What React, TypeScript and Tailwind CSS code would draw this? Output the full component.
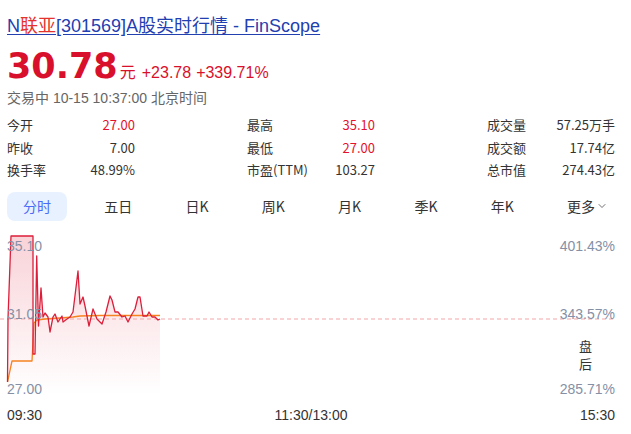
import { ChevronDown } from 'lucide-react';

const SANS = "font-['Liberation_Sans','Noto_Sans_CJK_SC',sans-serif]";
const CJK = "font-['Noto_Sans_CJK_SC','Liberation_Sans',sans-serif]";

interface Stat {
  label: string;
  value: string;
  up?:   boolean;
}

const STATS: Stat[] = [
  { label: '今开',      value: '27.00', up: true },
  { label: '最高',      value: '35.10', up: true },
  { label: '成交量',    value: '57.25万手' },
  { label: '昨收',      value: '7.00' },
  { label: '最低',      value: '27.00', up: true },
  { label: '成交额',    value: '17.74亿' },
  { label: '换手率',    value: '48.99%' },
  { label: '市盈(TTM)', value: '103.27' },
  { label: '总市值',    value: '274.43亿' },
];

const TABS = ['分时', '五日', '日K', '周K', '月K', '季K', '年K'];

// minute prices, already in page coordinates (x, y)
const PRICE: [number, number][] = [
  [7.5, 383], [8, 320], [11, 237], [33, 237], [33, 355], [35, 355], [36.7, 257],
  [38.5, 327], [41, 289], [43, 318], [45, 314], [48, 318], [50, 333], [53, 318],
  [55, 315], [58, 323], [62, 317], [63, 323], [67, 320], [70, 318], [73, 313],
  [78, 272], [80, 305], [83, 298], [85, 307], [89, 327], [93, 310], [97, 320],
  [102, 325], [106, 313], [110, 297], [112, 301], [115, 313], [118, 313],
  [122, 318], [125, 317], [128, 323], [132, 315], [135, 310], [138, 298],
  [140, 298], [143, 317], [147, 317], [149, 313], [152, 318], [155, 318],
  [158, 321], [160, 320],
];

const AVG: [number, number][] = [
  [7.5, 383], [12, 362], [32, 362], [34, 324], [37, 321], [45, 320], [60, 319],
  [73, 318], [80, 317], [100, 316.5], [160, 316.5],
];

const toPath = (pts: [number, number][]) =>
  pts.map(([x, y], i) => `${i === 0 ? 'M' : 'L'}${x} ${y}`).join(' ');

function IntradayChart() {
  const line = toPath(PRICE);
  const area = `${line} L160 396 L7.5 396 Z`;
  return (
    <div className="relative h-[168px] w-full">
      <svg width="631" height="168" viewBox="0 232 631 168" className="absolute inset-0">
        <defs>
          <linearGradient id="fill" x1="0" y1="237" x2="0" y2="396" gradientUnits="userSpaceOnUse">
            <stop offset="0" stopColor="#e0203a" stopOpacity="0.2" />
            <stop offset="1" stopColor="#e0203a" stopOpacity="0" />
          </linearGradient>
        </defs>
        <path d={area} fill="url(#fill)" />
        <line x1="0" y1="320" x2="615" y2="320" stroke="#f3a7a9" strokeWidth="1" strokeDasharray="4 3" />
        <path d={toPath(AVG)} fill="none" stroke="#f5821f" strokeWidth="1.3" strokeLinejoin="round" />
        <path d={line} fill="none" stroke="#dc1e3a" strokeWidth="1.3" strokeLinejoin="round" />
      </svg>

      <div className={`${SANS} absolute left-[7px] top-[7px] text-[14px] leading-4 text-[#8590a6]`}>35.10</div>
      <div className={`${SANS} absolute left-[7px] top-[75px] text-[14px] leading-4 text-[#8590a6]`}>31.05</div>
      <div className={`${SANS} absolute left-[7px] top-[150px] text-[14px] leading-4 text-[#8590a6]`}>27.00</div>
      <div className={`${SANS} absolute right-[16px] top-[7px] text-[14px] leading-4 text-[#8590a6]`}>401.43%</div>
      <div className={`${SANS} absolute right-[16px] top-[75px] text-[14px] leading-4 text-[#8590a6]`}>343.57%</div>
      <div className={`${SANS} absolute right-[16px] top-[150px] text-[14px] leading-4 text-[#8590a6]`}>285.71%</div>
      <div className={`${CJK} absolute left-[579px] top-[106px] flex flex-col text-[13px] leading-[18px] text-[#333]`}>
        <span>盘</span>
        <span>后</span>
      </div>
    </div>
  );
}

export default function App() {
  return (
    <div className="w-[631px] h-[434px] bg-white overflow-hidden">
      <div className="px-[7px] pt-[16px]">
        <a href="#" className={`${SANS} block text-[18px] leading-5 text-[#2240b0] underline underline-offset-[2px]`}>
          N<span className="text-[#e5322d]">联亚</span>[301569]A股实时行情 - FinScope
        </a>

        <div className="mt-[8px] flex items-baseline h-[44px]">
          <span className="font-['DejaVu_Sans',sans-serif] font-bold text-[35px] leading-[44px] text-[#d8102b]">30.78</span>
          <span className={`${CJK} ml-[2px] text-[16px] text-[#d8102b]`}>元</span>
          <span className={`${SANS} ml-[6px] text-[16px] text-[#d8102b]`}>+23.78</span>
          <span className={`${SANS} ml-[5px] text-[16px] text-[#d8102b]`}>+339.71%</span>
        </div>

        <div className={`${SANS} text-[14px] leading-[20px] text-[#666]`}>
          交易中 10-15 10:37:00 北京时间
        </div>

        <div className={`${CJK} mt-[6px] grid grid-cols-[128px_128px_128px] gap-x-[112px] text-[13px] leading-[22.5px] text-[#333]`}>
          {STATS.map((s) => (
            <div key={s.label} className="flex justify-between">
              <span>{s.label}</span>
              <span className={s.up ? 'text-[#e5112d]' : ''}>{s.value}</span>
            </div>
          ))}
        </div>
      </div>

      <div className={`${CJK} mt-[10px] flex justify-between px-[7px] text-[14px] text-[#333]`}>
        {TABS.map((t, i) => (
          <div
            key={t}
            className={`flex h-[29px] items-center rounded-[8px] px-4 ${i === 0 ? 'bg-[#e8f1ff] text-[#4a6cf7]' : ''}`}
          >
            {t}
          </div>
        ))}
        <div className="flex h-[29px] items-center px-4">
          更多
          <ChevronDown size={12} strokeWidth={1.4} className="ml-[1px]" />
        </div>
      </div>

      <div className="mt-[10px]">
        <IntradayChart />
      </div>

      <div className={`${SANS} mt-[8px] flex justify-between px-[7px] pr-[16px] text-[14px] leading-4 text-[#333]`}>
        <span className="w-[60px]">09:30</span>
        <span>11:30/13:00</span>
        <span className="w-[60px] text-right">15:30</span>
      </div>
    </div>
  );
}
